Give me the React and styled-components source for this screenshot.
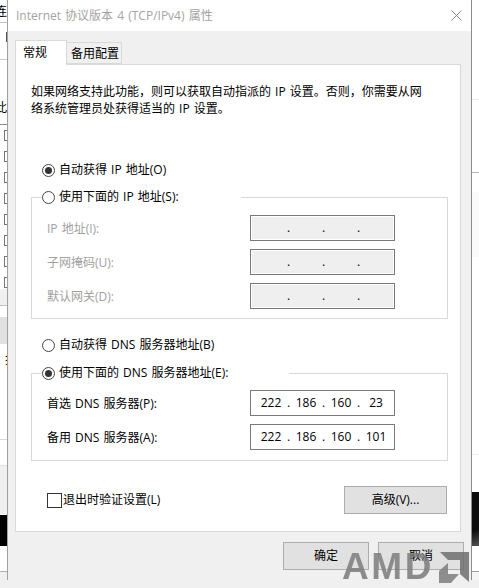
import React from "react";
import styled, { createGlobalStyle } from "styled-components";

const GlobalStyle = createGlobalStyle`
  html, body {
    margin: 0;
    padding: 0;
    background: #f0f0f0;
    overflow: hidden;
  }
  * { box-sizing: border-box; }
`;

const FONT = `"Open Sans", "Noto Sans CJK SC", sans-serif`;

const Desktop = styled.div`
  position: relative;
  width: 479px;
  height: 588px;
  overflow: hidden;
  background: #f0f0f0;
  font-family: ${FONT};
  font-size: 12px;
  word-spacing: 1px;
  color: #000;
`;

const Main = styled.div`
  display: flex;
  height: 580px;
`;

/* slivers of the window behind the dialog */
const Sliver = styled.div`
  width: 7px;
  display: flex;
  flex-direction: column;
  flex: none;
  overflow: hidden;
  background: #fff;
`;

const SliverBand = styled.div`
  height: ${(p) => p.h}px;
  flex: none;
  overflow: hidden;
  background: ${(p) => p.bg || "#fff"};
  border-bottom: ${(p) => (p.line ? `1px solid ${p.line}` : "none")};
  line-height: ${(p) => p.lh || p.h}px;
  white-space: nowrap;
`;

const BlackBand = styled(SliverBand)`
  background: linear-gradient(160deg, #0c0c0c 70%, #555 100%);
`;

const BehindChar = styled.span`
  display: block;
  margin-left: ${(p) => p.x}px;
  font-size: 12px;
`;

const BehindTick = styled.div`
  width: 1px;
  height: 10px;
  margin: 9px 0 0 6px;
  background: #555;
`;

const CheckStack = styled.div`
  height: 164px;
  flex: none;
  padding-top: 5px;
  display: flex;
  flex-direction: column;
  gap: 10px;
`;

const MiniCheck = styled.div`
  width: 11px;
  height: 11px;
  flex: none;
  margin-left: 4px;
  padding: 3px 0 0 2px;
  border: 1px solid #777;
  &::after {
    content: "";
    display: ${(p) => (p.on ? "block" : "none")};
    width: 2px;
    height: 5px;
    background: #222;
  }
`;

const Dialog = styled.div`
  width: 465px;
  flex: none;
  display: flex;
  flex-direction: column;
  background: #f0f0f0;
  border-left: 1px solid #a0a0a0;
  border-right: 1px solid #8c8c8c;
`;

const TitleBar = styled.div`
  height: 31px;
  flex: none;
  background: #fff;
  display: flex;
  align-items: center;
  justify-content: space-between;
  padding: 0 9px 1px 8px;
  color: #a3a3a3;
  font-size: 12px;
`;

const Body = styled.div`
  padding: 9px 10px 0 7px;
  display: flex;
  flex-direction: column;
`;

const TabStrip = styled.div`
  display: flex;
  align-items: flex-end;
  height: 24px;
  position: relative;
  z-index: 1;
`;

const Tab = styled.div`
  height: ${(p) => (p.active ? 25 : 22)}px;
  width: ${(p) => (p.active ? 52 : 56)}px;
  margin-bottom: ${(p) => (p.active ? -1 : 0)}px;
  margin-left: ${(p) => (p.active ? 0 : -1)}px;
  border: 1px solid #d9d9d9;
  border-bottom: ${(p) => (p.active ? "none" : "1px solid #d9d9d9")};
  background: ${(p) => (p.active ? "#fff" : "#f0f0f0")};
  display: flex;
  align-items: center;
  padding: ${(p) => (p.active ? "0 0 1px 7px" : "1px 0 0 4px")};
  line-height: 1;
`;

const Panel = styled.div`
  height: 468px;
  background: #fff;
  border: 1px solid #d9d9d9;
  padding: 18px 13px 0 15px;
  display: flex;
  flex-direction: column;
`;

const Intro = styled.p`
  margin: 0;
  height: 40px;
  line-height: 17px;
  white-space: pre-line;
`;

const Radio = styled.span`
  width: 13px;
  height: 13px;
  flex: none;
  border-radius: 50%;
  border: 1px solid #444;
  background: #fff;
  display: flex;
  align-items: center;
  justify-content: center;
  &::after {
    content: "";
    width: 7px;
    height: 7px;
    border-radius: 50%;
    background: ${(p) => (p.on ? "#333" : "transparent")};
  }
`;

const Choice = styled.label`
  display: flex;
  align-items: center;
  gap: 4px;
  height: 16px;
  margin: ${(p) => p.m || "0"};
  padding-left: ${(p) => (p.inLegend ? 0 : 11)}px;
  line-height: 16px;
  white-space: nowrap;
`;

const Group = styled.fieldset`
  margin: ${(p) => p.m || "0"};
  padding: 0 0 0 15px;
  width: 417px;
  height: ${(p) => p.h}px;
  min-width: 0;
  border: 1px solid #d9d9d9;
  border-radius: 0;
`;

const GroupLegend = styled.legend`
  margin-left: -5px;
  padding: 0;
  width: ${(p) => p.w}px;
  height: 16px;
  display: block;
`;

const FieldRow = styled.div`
  display: flex;
  align-items: center;
  justify-content: space-between;
  height: 26px;
  margin-top: ${(p) => p.mt}px;
  padding-right: 52px;
  color: ${(p) => (p.off ? "#a0a0a0" : "#000")};
  line-height: 1;
`;

const FieldLabel = styled.span`
  padding-top: 2px;
`;

const IpBox = styled.div`
  width: 145px;
  height: 26px;
  display: grid;
  grid-template-columns: 26px 9px 26px 9px 26px 9px 26px;
  align-items: center;
  justify-items: center;
  padding-left: 7px;
  border: 1px solid #7a7a7a;
  background: ${(p) => (p.off ? "#efefef" : "#fff")};
  box-shadow: ${(p) => (p.off ? "inset 0 0 0 1px #fff" : "none")};
  color: #000;
  font-size: 12px;
  white-space: nowrap;
`;

const Footer = styled.div`
  display: flex;
  justify-content: space-between;
  align-items: center;
  margin-top: 25px;
  padding: 0 0 0 16px;
`;

const Check = styled.label`
  display: flex;
  align-items: center;
  gap: 1px;
  line-height: 1;
  &::before {
    content: "";
    width: 13px;
    height: 13px;
    border: 1px solid #333;
    background: #fff;
  }
`;

const Button = styled.button`
  width: ${(p) => p.w}px;
  height: 28px;
  padding: 0;
  border: 1px solid #adadad;
  border-radius: 0;
  background: #e1e1e1;
  color: #000;
  font: inherit;
  line-height: 1;
`;

const ButtonBar = styled.div`
  display: flex;
  justify-content: flex-end;
  gap: 9px;
  margin: 10px -3px 0 0;
`;

const Watermark = styled.div`
  position: absolute;
  left: 342px;
  top: 552px;
  display: flex;
  align-items: flex-start;
  gap: 5px;
  pointer-events: none;
`;

const WatermarkText = styled.span`
  font-family: "Liberation Sans", sans-serif;
  font-weight: 700;
  font-size: 37px;
  line-height: 30px;
  letter-spacing: 2.6px;
  background: linear-gradient(180deg, rgba(120, 120, 120, 0.8), rgba(128, 128, 128, 0.92));
  -webkit-background-clip: text;
  background-clip: text;
  color: transparent;
`;

const BottomStrip = styled.div`
  height: 8px;
  background: #f0f0f0;
`;

const leftChecks = [true, true, true, true, false, true, true, true];

function LeftSliver() {
  return (
    <Sliver>
      <SliverBand h={23} line="#c4c4c4"><BehindChar x={-5}>连</BehindChar></SliverBand>
      <SliverBand h={37} line="#c8c8c8"><BehindTick /></SliverBand>
      <SliverBand h={65} line="#8a8a8a" lh={96}><BehindChar x={-5}>此</BehindChar></SliverBand>
      <CheckStack>
        {leftChecks.map((on, i) => <MiniCheck key={i} on={on} />)}
      </CheckStack>
      <SliverBand h={17} bg="#f0f0f0" line="#c0c0c0" />
      <SliverBand h={11} />
      <SliverBand h={27} bg="#e1e1e1" />
      <SliverBand h={96} line="#d8d8d8" lh={32}><BehindChar x={5}>护</BehindChar></SliverBand>
      <SliverBand h={26} line="#e0e0e0" />
      <SliverBand h={49} bg="#f0f0f0" />
      <SliverBand h={31} bg="#000" />
      <SliverBand h={26} line="#b0b0b0" />
      <SliverBand h={8} bg="#f0f0f0" />
    </Sliver>
  );
}

function RightSliver() {
  return (
    <Sliver>
      <SliverBand h={100} line="#ececec" />
      <SliverBand h={73} line="#b8b8b8" />
      <SliverBand h={19} />
      <SliverBand h={65} bg="#fafafa" />
      <SliverBand h={198} line="#f0f0f0" />
      <SliverBand h={37} />
      <BlackBand h={54} />
      <SliverBand h={26} line="#a0a0a0" />
      <SliverBand h={8} bg="#f5f5f5" />
    </Sliver>
  );
}

function IpField({ parts, off }) {
  return (
    <IpBox off={off}>
      <span>{parts[0]}</span><span>.</span>
      <span>{parts[1]}</span><span>.</span>
      <span>{parts[2]}</span><span>.</span>
      <span>{parts[3]}</span>
    </IpBox>
  );
}

const EMPTY = ["", "", "", ""];

export default function App() {
  return (
    <Desktop>
      <GlobalStyle />
      <Main>
        <LeftSliver />
        <Dialog>
          <TitleBar>
            <span>Internet 协议版本 4 (TCP/IPv4) 属性</span>
            <svg width="11" height="11" viewBox="0 0 11 11">
              <path d="M.5.5l10 10M10.5.5l-10 10" stroke="#8a8a8a" strokeWidth="1" fill="none" />
            </svg>
          </TitleBar>
          <Body>
            <TabStrip>
              <Tab active>常规</Tab>
              <Tab>备用配置</Tab>
            </TabStrip>
            <Panel>
              <Intro>{"如果网络支持此功能，则可以获取自动指派的 IP 设置。否则，你需要从网\n络系统管理员处获得适当的 IP 设置。"}</Intro>
              <Choice m="39px 0 0"><Radio on />自动获得 IP 地址(O)</Choice>
              <Group h={130} m="11px 0 0">
                <GroupLegend w={199}>
                  <Choice inLegend><Radio />使用下面的 IP 地址(S):</Choice>
                </GroupLegend>
                <FieldRow off mt={10}><FieldLabel>IP 地址(I):</FieldLabel><IpField off parts={EMPTY} /></FieldRow>
                <FieldRow off mt={8}><FieldLabel>子网掩码(U):</FieldLabel><IpField off parts={EMPTY} /></FieldRow>
                <FieldRow off mt={8}><FieldLabel>默认网关(D):</FieldLabel><IpField off parts={EMPTY} /></FieldRow>
              </Group>
              <Choice m="18px 0 0"><Radio />自动获得 DNS 服务器地址(B)</Choice>
              <Group h={96} m="12px 0 0">
                <GroupLegend w={247}>
                  <Choice inLegend><Radio on />使用下面的 DNS 服务器地址(E):</Choice>
                </GroupLegend>
                <FieldRow mt={9}><FieldLabel>首选 DNS 服务器(P):</FieldLabel><IpField parts={["222", "186", "160", "23"]} /></FieldRow>
                <FieldRow mt={8}><FieldLabel>备用 DNS 服务器(A):</FieldLabel><IpField parts={["222", "186", "160", "101"]} /></FieldRow>
              </Group>
              <Footer>
                <Check>退出时验证设置(L)</Check>
                <Button w={103}>高级(V)...</Button>
              </Footer>
            </Panel>
            <ButtonBar>
              <Button w={86}>确定</Button>
              <Button w={86}>取消</Button>
            </ButtonBar>
          </Body>
        </Dialog>
        <RightSliver />
      </Main>
      <BottomStrip />
      <Watermark>
        <WatermarkText>AMD</WatermarkText>
        <svg width="31" height="31" viewBox="0 0 31 31">
          <path d="M1 0H30V30L21 22V8H9Z" fill="rgba(110,110,110,.85)" />
          <path d="M0 19L9 11V22H20L12 31H0Z" fill="rgba(125,125,125,.85)" />
        </svg>
      </Watermark>
    </Desktop>
  );
}
